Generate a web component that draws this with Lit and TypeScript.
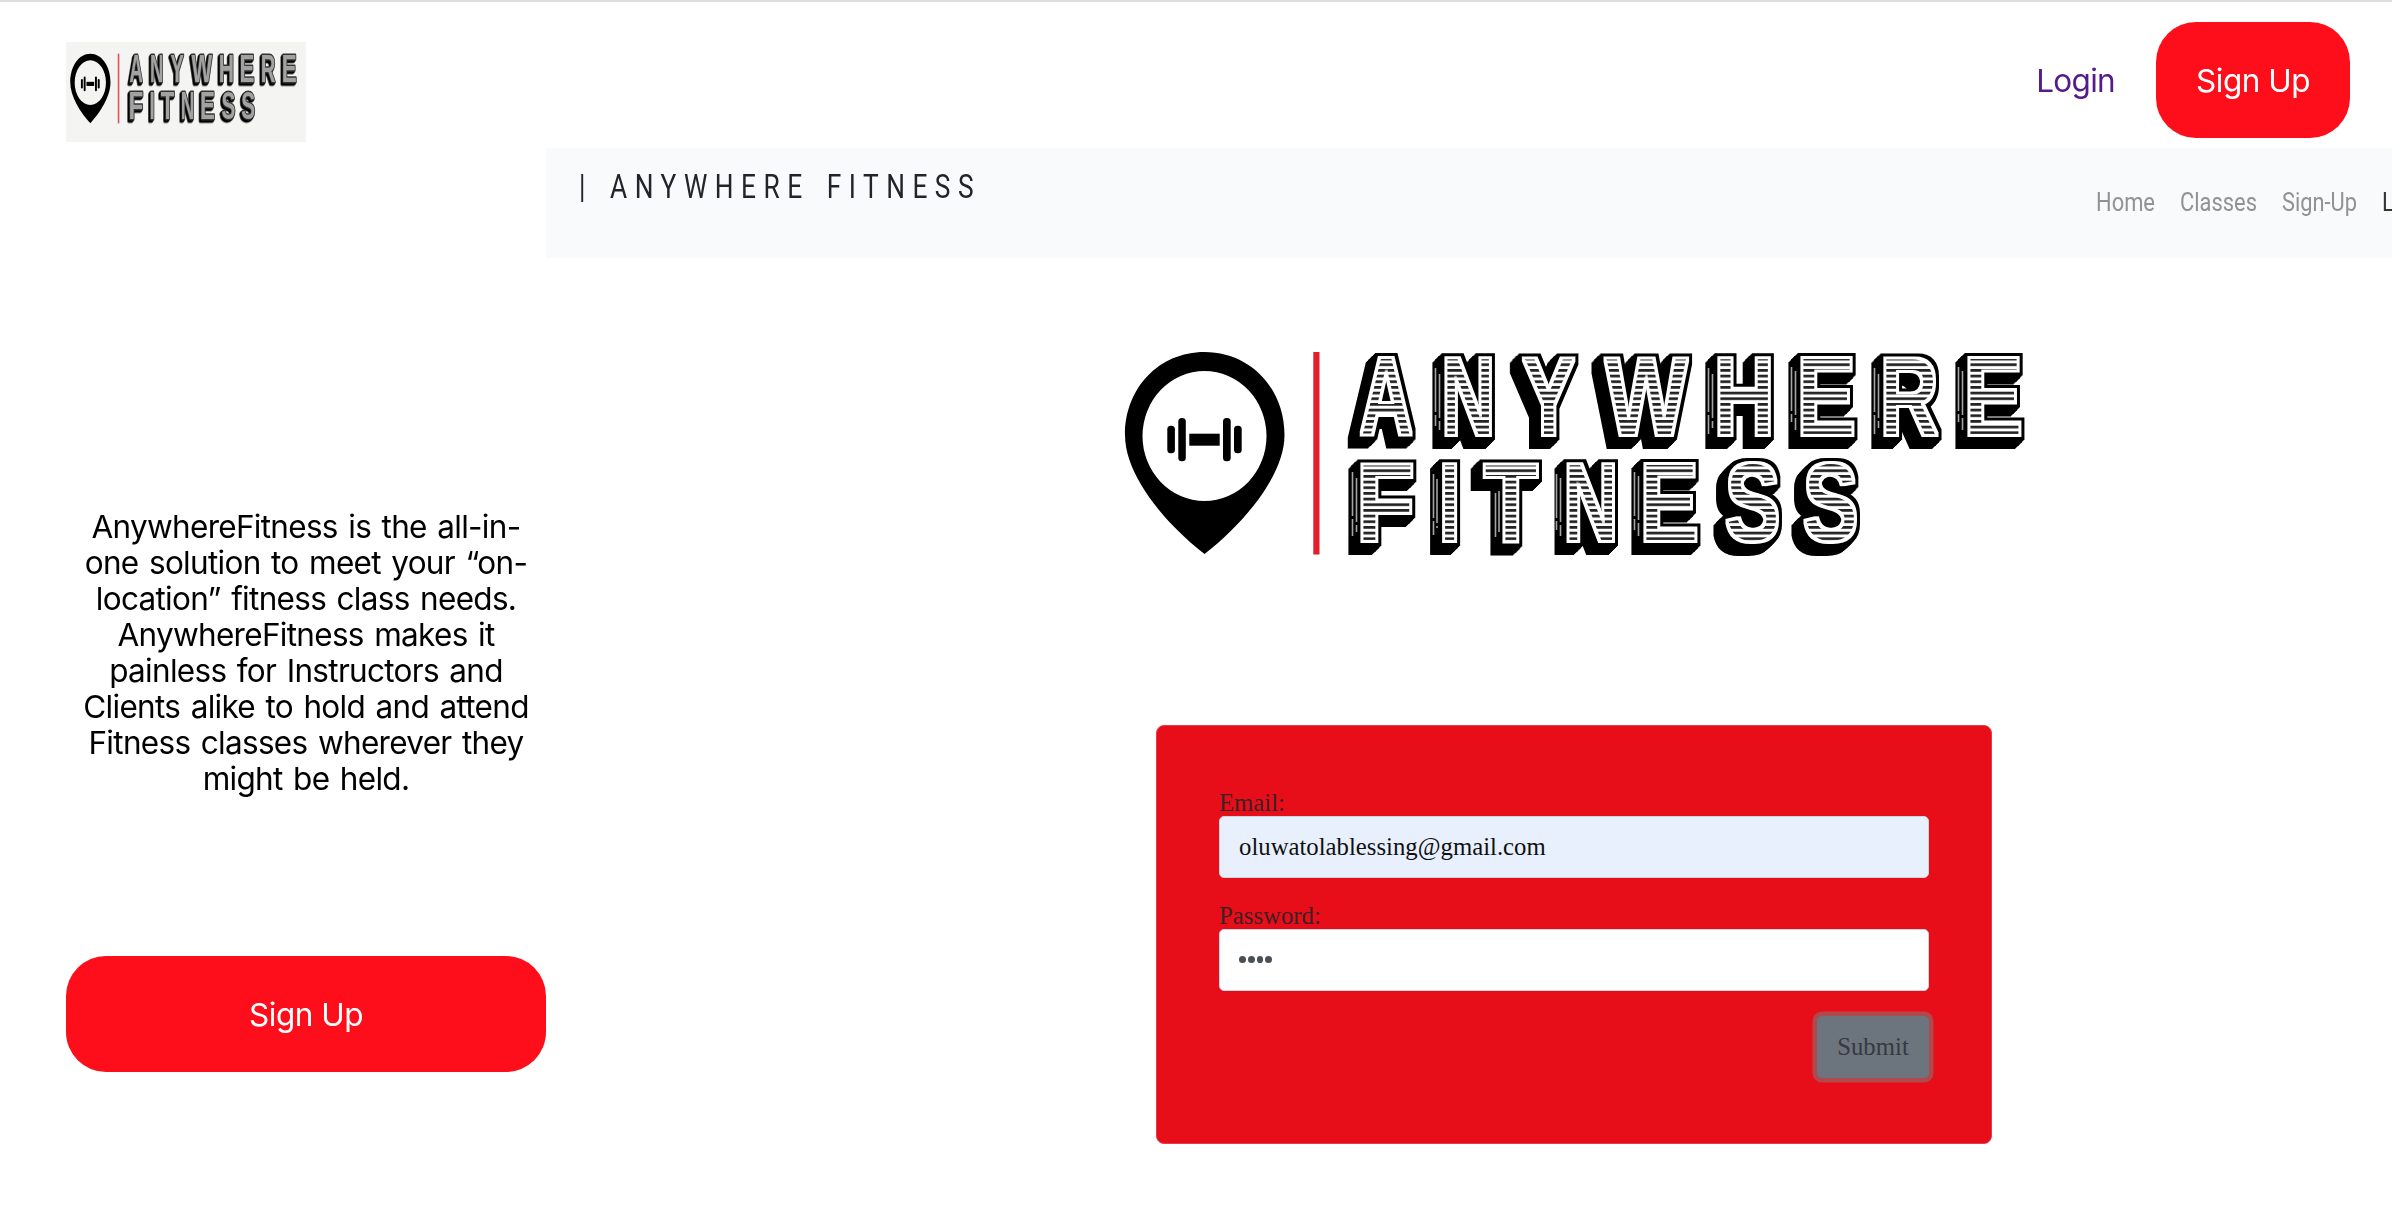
import { LitElement, html, svg, css } from "lit";
import { customElement, property } from "lit/decorators.js";

type Glyph = { ch: string; left: number; right: number; min: number; max: number };

// Ink extents of the bold capitals, in 1/2048 em.
const INK: Record<string, [number, number]> = {
  A: [20, 1458], N: [137, 1342], Y: [30, 1336], W: [6, 1926], H: [137, 1342],
  E: [137, 1275], R: [137, 1441], F: [137, 1168], I: [137, 432], T: [42, 1208], S: [62, 1286],
};
const g = (ch: string, left: number, right: number): Glyph => ({
  ch, left: left + 2.5, right: right - 4, min: INK[ch][0], max: INK[ch][1],
});
const ROW_ONE = [
  g("A", 238, 296), g("N", 324, 374), g("Y", 401, 458), g("W", 483, 571),
  g("H", 597, 653), g("E", 680, 736), g("R", 763, 821), g("E", 847, 903),
];
const ROW_TWO = [
  g("F", 240, 295), g("I", 321.5, 339), g("T", 363, 420), g("N", 446, 497),
  g("E", 523, 579), g("S", 605, 661), g("S", 683, 739),
];
const SIZE = 112;

// Short glints on the dark left side of each letter: x, top, bottom.
const GLINTS: [number, number, number][] = [
  [315.5, 18, 76], [319.5, 24, 80],
  [588.5, 18, 84], [592.5, 24, 78], [671.5, 17, 72], [675.5, 21, 80],
  [754.5, 18, 84], [758.5, 24, 78], [838.5, 17, 72], [842.5, 21, 80],
  [232.5, 122, 186], [236.5, 128, 182], [313.5, 124, 185], [317, 129, 178],
  [375.5, 143, 187], [379, 141, 182],
  [436.5, 124, 180], [440.5, 128, 186], [514.5, 122, 180], [518.5, 126, 186],
];

@customElement("brand-logo")
export class BrandLogo extends LitElement {
  @property({ type: Boolean }) compact = false;

  static styles = css`
    :host { display: block; }
    .wide { height: 212px; }
    .narrow { height: 73px; }
    svg { display: block; width: 100%; overflow: visible; }
    .word { font-family: "Liberation Sans", Arial, sans-serif; font-weight: 700; font-size: 112px; }
    .small {
      fill: #a2a2a2; stroke: #333; stroke-width: 8; paint-order: stroke; stroke-linejoin: round;
      filter: drop-shadow(-3px 3px 0 #000) drop-shadow(-4px 4px 0 #000);
    }
  `;

  private row(glyphs: Glyph[], baseline: number) {
    return glyphs.map((l) => {
      const k = (l.right - l.left) / (((l.max - l.min) / 2048) * SIZE);
      const x = l.left - (l.min / 2048) * SIZE * k;
      return svg`<text transform="translate(${x} ${baseline}) scale(${k} 1)">${l.ch}</text>`;
    });
  }

  render() {
    return html`<svg class=${this.compact ? "narrow" : "wide"} viewBox="0 0 910 212" preserveAspectRatio="none" role="img" aria-label="Anywhere Fitness">
      <defs>
        <pattern id="lines" width="20" height="5.667" patternUnits="userSpaceOnUse" y="8.2">
          <rect width="20" height="5.667" fill="#fff"></rect>
          <rect width="20" height="2.7" fill="#222"></rect>
        </pattern>
        <filter id="block" filterUnits="userSpaceOnUse" x="200" y="-10" width="720" height="230" color-interpolation-filters="sRGB">
          <feMorphology in="SourceAlpha" operator="dilate" radius="2" result="body"></feMorphology>
          <feMorphology in="SourceAlpha" operator="dilate" radius="5" result="edge"></feMorphology>
          <feOffset in="edge" dx="-1" dy="1" result="o1"></feOffset>
          <feMerge result="m1"><feMergeNode in="edge"></feMergeNode><feMergeNode in="o1"></feMergeNode></feMerge>
          <feOffset in="m1" dx="-2" dy="2" result="o2"></feOffset>
          <feMerge result="m2"><feMergeNode in="m1"></feMergeNode><feMergeNode in="o2"></feMergeNode></feMerge>
          <feOffset in="m2" dx="-3" dy="3" result="o3"></feOffset>
          <feMerge result="m3"><feMergeNode in="m2"></feMergeNode><feMergeNode in="o3"></feMergeNode></feMerge>
          <feOffset in="m3" dx="-3" dy="3" result="o4"></feOffset>
          <feMerge result="m4"><feMergeNode in="m3"></feMergeNode><feMergeNode in="o4"></feMergeNode></feMerge>
          <feFlood flood-color="#fff"></feFlood>
          <feComposite in2="body" operator="in" result="face"></feComposite>
          <feMorphology in="SourceAlpha" operator="erode" radius="1" result="core"></feMorphology>
          <feComposite in="SourceGraphic" in2="core" operator="in" result="hatch"></feComposite>
          <feMerge>
            <feMergeNode in="m4"></feMergeNode><feMergeNode in="face"></feMergeNode><feMergeNode in="hatch"></feMergeNode>
          </feMerge>
        </filter>
      </defs>
      <path fill-rule="evenodd" d="M84.5 2C39 2 5 38 5 85C5 126 46 174 84.5 204C123 174 164.500 126 164.500 85C164.500 38 130 2 84.500 2ZM84.500 21A62 65 0 0 1 84.500 151A62 65 0 0 1 84.500 21Z"></path>
      <rect x="47.300" y="75.700" width="7.600" height="27.600" rx="3.500"></rect>
      <rect x="58.300" y="68" width="7.500" height="43.300" rx="3.500"></rect>
      <rect x="69.300" y="83.700" width="30.400" height="12"></rect>
      <rect x="103" y="68" width="7.700" height="43.300" rx="3.500"></rect>
      <rect x="114" y="75.700" width="7.700" height="27.600" rx="3.500"></rect>
      <rect x="193.300" y="2" width="6.200" height="202.500" fill="${this.compact ? "#e0505a" : "#e31e2c"}"></rect>
      <g class="word ${this.compact ? "small" : ""}" fill="url(#lines)" filter="${this.compact ? "none" : "url(#block)"}">
        ${this.row(ROW_ONE, 84.5)}${this.row(ROW_TWO, 190.5)}
      </g>
      ${this.compact ? "" : GLINTS.map(([x, a, b]) => svg`<line x1=${x} x2=${x} y1=${a} y2=${b} stroke="#a5a5a5" stroke-width="1.600" stroke-dasharray="44 3"></line>`)}
    </svg>`;
  }
}

// Condensed lettering: a run of text fitted to a set width.
@customElement("fitted-text")
export class FittedText extends LitElement {
  @property() text = "";
  @property({ type: Number }) width = 0;

  static styles = css`
    :host { display: block; }
    svg { display: block; overflow: visible; height: 40px; }
    text { font-family: Roboto, sans-serif; fill: currentColor; }
  `;
  render() {
    return html`<svg width=${this.width} height="40">
      <text y="31" textLength=${this.width} lengthAdjust="spacingAndGlyphs">${this.text}</text>
    </svg>`;
  }
}

@customElement("app-root")
export class AppRoot extends LitElement {
  static styles = css`
    :host { display: block; font-family: Inter, sans-serif; font-size: 31.5px; color: #000; }
    * { box-sizing: border-box; }
    .page { height: 1226px; overflow: hidden; background: #fff; display: flex; flex-direction: column; }
    header {
      height: 148px; flex: none; border-top: 2px solid #dcdbe0; padding: 20px 42px 0 66px;
      display: flex; justify-content: space-between; align-items: flex-start;
    }
    .mark { width: 240px; height: 100px; margin-top: 20px; background: #f4f4f2; padding: 10.5px 7.5px 16px 3px; }
    .actions { display: flex; align-items: center; gap: 41px; }
    .login { color: #551a8b; text-decoration: none; letter-spacing: -0.7px; }
    .btn {
      height: 116px; border-radius: 40px; background: #fe0e1b; color: #fff;
      display: flex; align-items: center; justify-content: center; letter-spacing: -0.5px;
    }
    .top { width: 194px; }
    main { flex: 1; display: flex; }
    aside { width: 480px; margin-left: 66px; flex: none; display: flex; flex-direction: column; padding-top: 361px; }
    .intro {
      margin: 0; height: 447px; line-height: 36px; text-align: center; white-space: nowrap;
      letter-spacing: -0.7px; word-spacing: 2.3px;
    }
    .shot { flex: 1; min-width: 0; overflow: hidden; display: flex; flex-direction: column; }
    .bar { height: 109.5px; flex: none; background: #f8fafc; display: flex; justify-content: space-between; padding-left: 33px; }
    .title { font-size: 32.5px; color: #212529; padding-top: 19px; letter-spacing: 9.2px; word-spacing: 4px; }
    .links { display: flex; gap: 25px; padding-top: 31.5px; font-size: 26.7px; color: #919294; width: 296px; flex: none; }
    .current { color: #333; }
    .hero { width: 910px; height: 212px; margin: 92.5px 0 0 574px; flex: none; }
    form {
      width: 836px; height: 419px; flex: none; margin: 162.5px 0 0 610px; padding: 61.5px 62px 0; border-radius: 8px;
      background: #e70d19; border: 1px solid #e93b45; font-family: "Liberation Serif", serif; font-size: 24.75px; color: #212529;
      display: flex; flex-direction: column;
    }
    .label { height: 29px; line-height: 31px; color: #3a2226; }
    .second { margin-top: 22px; }
    .box {
      height: 62px; border: 1px solid #ced4da; border-radius: 5px; padding: 0 19px; background: #e8f0fe;
      display: flex; align-items: center; color: #101010;
    }
    .secret { background: #fff; color: #495057; }
    .dots { display: flex; gap: 2px; padding-bottom: 1px; }
    .dot { width: 6.8px; height: 7px; border-radius: 50%; background: #495057; }
    .submit {
      align-self: flex-end; width: 112px; height: 62px; margin-top: 25px; border-radius: 5px; background: #6c757d;
      box-shadow: 0 0 0 4.5px #b0484c; color: #343a40; display: flex; align-items: center; justify-content: center;
    }
  `;

  render() {
    return html`<div class="page">
      <header>
        <div class="mark"><brand-logo compact></brand-logo></div>
        <div class="actions">
          <a class="login">Login</a>
          <div class="btn top">Sign Up</div>
        </div>
      </header>
      <main>
        <aside>
          <p class="intro">
            AnywhereFitness is the all-in-<br />one solution to meet your “on-<br />location” fitness class needs.<br />
            AnywhereFitness makes it<br />painless for Instructors and<br />Clients alike to hold and attend<br />
            Fitness classes wherever they<br />might be held.
          </p>
          <div class="btn">Sign Up</div>
        </aside>
        <section class="shot">
          <div class="bar">
            <fitted-text class="title" text="| ANYWHERE FITNESS" width="402"></fitted-text>
            <nav class="links">
              <fitted-text text="Home" width="59"></fitted-text>
              <fitted-text text="Classes" width="77"></fitted-text>
              <fitted-text text="Sign-Up" width="75"></fitted-text>
              <fitted-text class="current" text="Login" width="55"></fitted-text>
            </nav>
          </div>
          <brand-logo class="hero"></brand-logo>
          <form>
            <div class="label">Email:</div>
            <div class="box">oluwatolablessing@gmail.com</div>
            <div class="label second">Password:</div>
            <div class="box secret">
              <span class="dots">${[0, 1, 2, 3].map(() => html`<span class="dot"></span>`)}</span>
            </div>
            <div class="submit">Submit</div>
          </form>
        </section>
      </main>
    </div>`;
  }
}
